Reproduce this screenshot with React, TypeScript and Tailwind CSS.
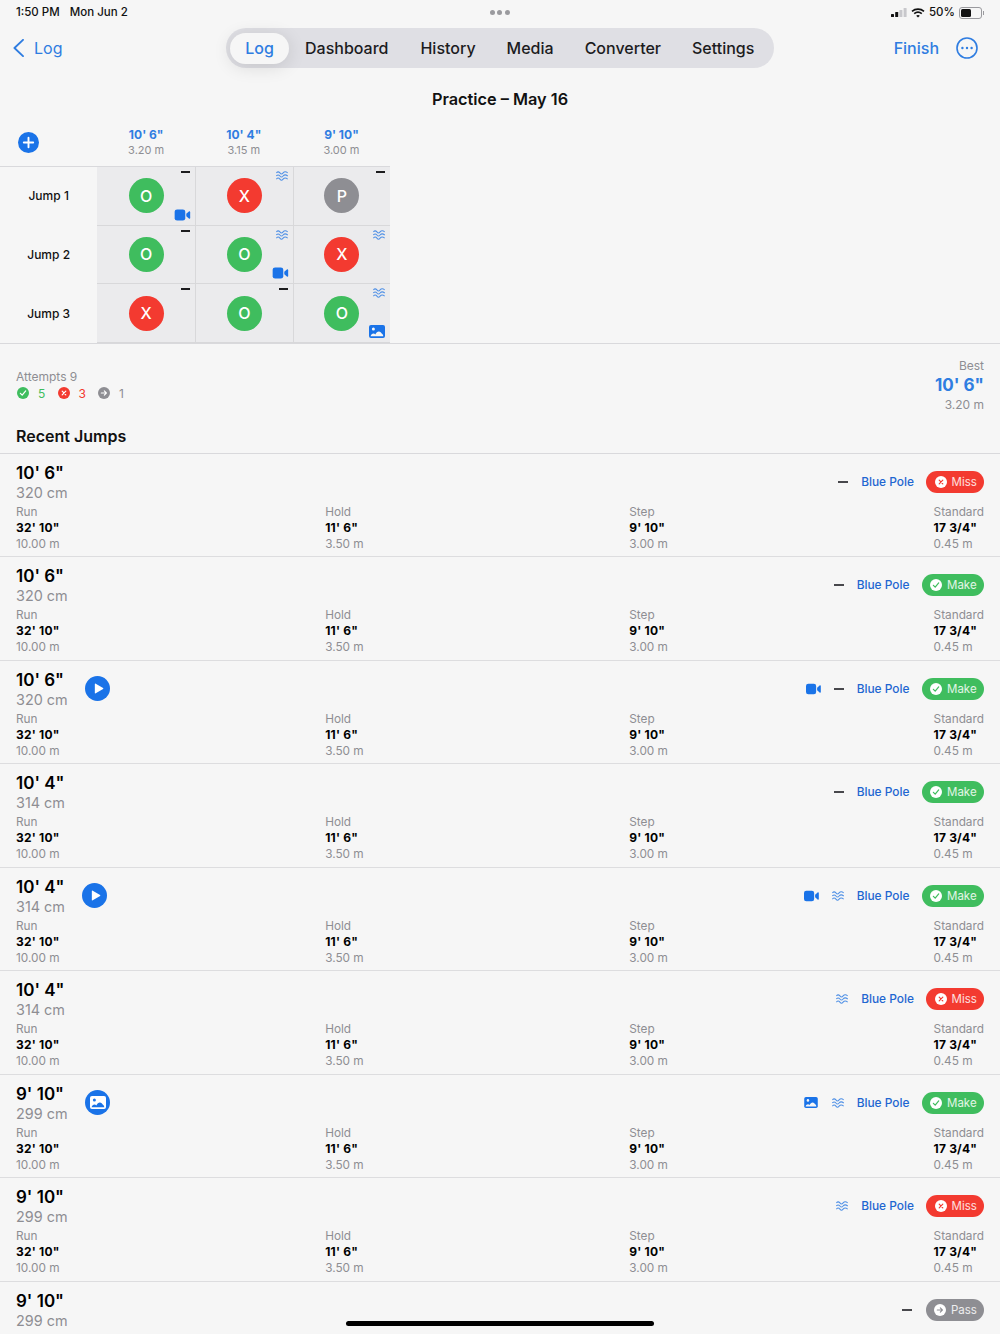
import React from "react";

const Video = ({ className = "" }: { className?: string }) => (
  <svg viewBox="0 0 17 13" className={className} fill="#1a73e8">
    <rect x="0" y="0.5" width="11.5" height="12" rx="2.6" />
    <path d="M12.6 5.2 15.4 2.6c.6-.5 1.4-.2 1.4.6v6.6c0 .8-.8 1.1-1.4.6l-2.8-2.6z" />
  </svg>
);

const Photo = ({ className = "", fill = "#1a73e8", ink = "#f6f6f6" }: { className?: string; fill?: string; ink?: string }) => (
  <svg viewBox="0 0 16 13" className={className}>
    <rect x="0" y="0" width="16" height="13" rx="2" fill={fill} />
    <circle cx="4.4" cy="4" r="1.5" fill={ink} />
    <path d="M1.6 11.2c.5-1.6 1.6-2.6 2.8-2.6.9 0 1.4.4 1.9.9.9-2 2.2-3.1 3.6-3.1 1.3 0 2.4 1 3 2.3.6.1 1.2.9 1.4 2.5z" fill={ink} />
  </svg>
);

const Waves = ({ className = "" }: { className?: string }) => (
  <svg viewBox="0 0 12 10" className={className} fill="none" stroke="#4f90e6" strokeWidth="1.05">
    <path d="M.3 1.9c1.3-1.4 2.4-1.4 3.6 0s2 1.4 3.2 0 2.9-1.4 4.6 0" />
    <path d="M.3 5c1.3-1.4 2.4-1.4 3.6 0s2 1.4 3.2 0 2.9-1.4 4.6 0" />
    <path d="M.3 8.1c1.3-1.4 2.4-1.4 3.6 0s2 1.4 3.2 0 2.9-1.4 4.6 0" />
  </svg>
);

const Dash = ({ className = "bg-[#1c1c1e]" }: { className?: string }) => <div className={`h-[2px] w-[9px] ${className}`} />;

type Mark = "check" | "x" | "arrow" | "plus";

const Glyph = ({ mark, color, className }: { mark: Mark; color: string; className?: string }) => (
  <svg viewBox="0 0 12 12" className={className}>
    <circle cx="6" cy="6" r="6" fill="white" />
    {mark === "check" && <path d="M3.4 6.3 5.2 8.2 8.7 3.9" fill="none" stroke={color} strokeWidth="1.2" strokeLinecap="round" strokeLinejoin="round" />}
    {mark === "x" && <path d="M4.2 4.2 7.8 7.8M7.8 4.2 4.2 7.8" fill="none" stroke={color} strokeWidth="1.2" strokeLinecap="round" />}
    {mark === "arrow" && <path d="M3.3 6h5M6.3 3.9 8.4 6 6.3 8.1" fill="none" stroke={color} strokeWidth="1.1" strokeLinecap="round" strokeLinejoin="round" />}
  </svg>
);

const StatDot = ({ mark, bg }: { mark: Mark; bg: string }) => (
  <svg viewBox="0 0 12 12" className="h-[12px] w-[12px]">
    <circle cx="6" cy="6" r="6" fill={bg} />
    {mark === "check" && <path d="M3.4 6.3 5.2 8.2 8.7 3.9" fill="none" stroke="white" strokeWidth="1.2" strokeLinecap="round" strokeLinejoin="round" />}
    {mark === "x" && <path d="M4.2 4.2 7.8 7.8M7.8 4.2 4.2 7.8" fill="none" stroke="white" strokeWidth="1.2" strokeLinecap="round" />}
    {mark === "arrow" && <path d="M3.3 6h5M6.3 3.9 8.4 6 6.3 8.1" fill="none" stroke="white" strokeWidth="1.1" strokeLinecap="round" strokeLinejoin="round" />}
  </svg>
);

type Cell = { r: "O" | "X" | "P"; top: "dash" | "wave"; media?: "video" | "photo" };

const grid: Cell[][] = [
  [{ r: "O", top: "dash", media: "video" }, { r: "X", top: "wave" }, { r: "P", top: "dash" }],
  [{ r: "O", top: "dash" }, { r: "O", top: "wave", media: "video" }, { r: "X", top: "wave" }],
  [{ r: "X", top: "dash" }, { r: "O", top: "dash" }, { r: "O", top: "wave", media: "photo" }],
];

const resultBg = { O: "bg-[#3fbd5e]", X: "bg-[#f33a30]", P: "bg-[#8e8e93]" };

type Status = "Miss" | "Make" | "Pass";
type Row = { ft: string; cm: string; status: Status; top: "dash" | "wave"; media?: "video" | "photo" };

const rows: Row[] = [
  { ft: `10' 6"`, cm: "320 cm", status: "Miss", top: "dash" },
  { ft: `10' 6"`, cm: "320 cm", status: "Make", top: "dash" },
  { ft: `10' 6"`, cm: "320 cm", status: "Make", top: "dash", media: "video" },
  { ft: `10' 4"`, cm: "314 cm", status: "Make", top: "dash" },
  { ft: `10' 4"`, cm: "314 cm", status: "Make", top: "wave", media: "video" },
  { ft: `10' 4"`, cm: "314 cm", status: "Miss", top: "wave" },
  { ft: `9' 10"`, cm: "299 cm", status: "Make", top: "wave", media: "photo" },
  { ft: `9' 10"`, cm: "299 cm", status: "Miss", top: "wave" },
];

const Pill = ({ status }: { status: Status }) => {
  const cfg = {
    Miss: { bg: "bg-[#f33a30]", mark: "x" as Mark, color: "#f33a30", w: "w-[58px]" },
    Make: { bg: "bg-[#3fbd5e]", mark: "check" as Mark, color: "#3fbd5e", w: "w-[62.5px]" },
    Pass: { bg: "bg-[#8e8e93]", mark: "arrow" as Mark, color: "#8e8e93", w: "w-[58.5px]" },
  }[status];
  return (
    <div className={`flex h-[22px] items-center gap-[5px] rounded-full pl-[8.5px] ${cfg.bg} ${cfg.w} text-[11.5px] text-white/85`}>
      <Glyph mark={cfg.mark} color={cfg.color} className="h-[12px] w-[12px]" />
      <span className="pt-[1px]">{status}</span>
    </div>
  );
};

const Measure = ({ label, ft, m }: { label: string; ft: string; m: string }) => (
  <div className="flex flex-col">
    <span className="h-[16px] text-[11.8px] leading-[16px] text-[#8e8e93]">{label}</span>
    <span className="h-[16px] text-[12px] font-bold leading-[16px] tracking-[0.2px] text-black">{ft}</span>
    <span className="h-[16px] text-[11.8px] leading-[16px] text-[#8e8e93]">{m}</span>
  </div>
);

const Heading = ({ ft, cm }: { ft: string; cm: string }) => (
  <div className="flex flex-col pt-[2px]">
    <span className="h-[20px] text-[17px] font-semibold leading-[20px] text-black">{ft}</span>
    <span className="h-[20px] text-[14.4px] leading-[20px] text-[#8e8e93]">{cm}</span>
  </div>
);

const JumpRow = ({ row }: { row: Row }) => (
  <div className="h-[103.5px] border-b border-[#dddddf] px-4 pt-[8px]">
    <div className="flex h-[40px] items-center">
      <Heading ft={row.ft} cm={row.cm} />
      {row.media && (
        <div className="ml-[17.5px] flex h-[25px] w-[25px] items-center justify-center rounded-full bg-[#1a73e8]">
          {row.media === "video" ? (
            <svg viewBox="0 0 12 12" className="ml-[2px] h-[11px] w-[11px]" fill="white"><path d="M2 1.2v9.6c0 .5.5.8 1 .5l8-4.8c.4-.3.4-.7 0-1L3 .7c-.5-.3-1 0-1 .5z" /></svg>
          ) : (
            <Photo className="h-[13px] w-[16px]" fill="white" ink="#1a73e8" />
          )}
        </div>
      )}
      <div className="ml-auto flex items-center">
        {row.media === "video" && <Video className="mr-[13px] h-[12px] w-[15px]" />}
        {row.media === "photo" && <Photo className="mr-[14px] h-[11px] w-[14px]" />}
        {row.top === "dash" ? <Dash className="mr-[13px] w-[10px] bg-[#48484c]" /> : <Waves className="mr-[13px] h-[10px] w-[12px]" />}
        <span className="mr-[12px] -mt-[1px] text-[11.9px] font-medium text-[#1f66d1]">Blue Pole</span>
        <Pill status={row.status} />
      </div>
    </div>
    <div className="flex justify-between pt-[2px]">
      <Measure label="Run" ft={`32' 10"`} m="10.00 m" />
      <Measure label="Hold" ft={`11' 6"`} m="3.50 m" />
      <Measure label="Step" ft={`9' 10"`} m="3.00 m" />
      <Measure label="Standard" ft={`17 3/4"`} m="0.45 m" />
    </div>
  </div>
);

const ColHead = ({ ft, m }: { ft: string; m: string }) => (
  <div className="mb-[2px] flex w-[97.67px] flex-col items-center">
    <span className="h-[16px] text-[12px] font-bold leading-[16px] text-[#2f7de1]">{ft}</span>
    <span className="-mt-[1px] h-[16px] text-[11px] leading-[16px] text-[#8e8e93]">{m}</span>
  </div>
);

export default function App() {
  return (
    <div className="relative h-[1334px] w-[1000px] overflow-hidden bg-[#f6f6f6] text-black" style={{ fontFamily: "Inter, 'Liberation Sans', sans-serif" }}>
      {/* status bar */}
      <div className="grid h-[24px] grid-cols-3 items-center px-4 text-[11.5px]">
        <div className="flex gap-[10px] pt-[1px] font-medium text-[#111]">
          <span>1:50 PM</span>
          <span>Mon Jun 2</span>
        </div>
        <div className="flex justify-center gap-[2.5px]">
          <i className="h-[5px] w-[5px] rounded-full bg-[#9a9a9e]" />
          <i className="h-[5px] w-[5px] rounded-full bg-[#9a9a9e]" />
          <i className="h-[5px] w-[5px] rounded-full bg-[#9a9a9e]" />
        </div>
        <div className="flex items-center justify-end pt-[1px] font-medium text-[#111]">
          <svg viewBox="0 0 16 9" className="mr-[4px] h-[9px] w-[16px]">
            <rect x="0" y="6" width="3" height="3" rx=".6" fill="#111" />
            <rect x="4.2" y="4" width="3" height="5" rx=".6" fill="#111" />
            <rect x="8.4" y="2" width="3" height="7" rx=".6" fill="#c8c8cc" />
            <rect x="12.6" y="0" width="3" height="9" rx=".6" fill="#c8c8cc" />
          </svg>
          <svg viewBox="0 0 14 10" className="mr-[4px] h-[10px] w-[14px]" fill="none" stroke="#111" strokeWidth="1.6">
            <path d="M1 3.4C4.4.4 9.6.4 13 3.4" />
            <path d="M3.2 5.7c2.2-1.9 5.4-1.9 7.6 0" />
            <path d="M7 9.6 5.2 7.7c1.1-.8 2.5-.8 3.6 0z" fill="#111" stroke="none" />
          </svg>
          <span className="mr-[4px]">50%</span>
          <div className="flex items-center">
            <div className="flex h-[12px] w-[23px] items-center rounded-[3px] border border-[#9a9a9e] p-[1px]">
              <div className="h-full w-[10px] rounded-[1.5px] bg-[#111]" />
            </div>
            <div className="ml-[1px] h-[4px] w-[1px] bg-[#9a9a9e]" />
          </div>
        </div>
      </div>

      {/* nav bar */}
      <div className="mt-[4px] grid h-[40px] grid-cols-[226px_548px_226px] items-center">
        <div className="flex items-center pl-[13px] text-[16px] text-[#2f7de1]">
          <svg viewBox="0 0 12 20" className="mr-[10px] h-[18px] w-[11px]" fill="none" stroke="#2f7de1" strokeWidth="2.1" strokeLinecap="round" strokeLinejoin="round">
            <path d="M11 1 1.5 10 11 19" />
          </svg>
          <span>Log</span>
        </div>
        <div className="flex h-[40px] items-center rounded-full bg-[#dfdfe4] pl-[4px] text-[16px] font-medium text-[#1c1c1e]">
          <div className="flex h-[31px] w-[59px] shrink-0 items-center justify-center rounded-full bg-[#f6f6f6] text-[#2f7de1] shadow-[0_3px_18px_rgba(0,0,0,0.12)]">Log</div>
          <span className="ml-[16px]">Dashboard</span>
          <span className="ml-[32px]">History</span>
          <span className="ml-[31px]">Media</span>
          <span className="ml-[31px]">Converter</span>
          <span className="ml-[31px]">Settings</span>
        </div>
        <div className="flex items-center justify-end gap-[17px] pr-[22px] text-[16px] font-medium text-[#2f7de1]">
          <span>Finish</span>
          <svg viewBox="0 0 22 22" className="h-[22px] w-[22px]" fill="none" stroke="#2f7de1" strokeWidth="1.6">
            <circle cx="11" cy="11" r="10" />
            <circle cx="6.4" cy="11" r="1.2" fill="#2f7de1" stroke="none" />
            <circle cx="11" cy="11" r="1.2" fill="#2f7de1" stroke="none" />
            <circle cx="15.6" cy="11" r="1.2" fill="#2f7de1" stroke="none" />
          </svg>
        </div>
      </div>

      {/* title */}
      <div className="mt-[19px] h-[24px] text-center text-[16.3px] font-semibold leading-[24px] text-[#111]">Practice – May 16</div>

      {/* columns */}
      <div className="mt-[15px] flex h-[34px] items-center">
        <div className="flex w-[97.33px] pl-[18px]">
          <svg viewBox="0 0 21 21" className="-mt-[1px] h-[21px] w-[21px]">
            <circle cx="10.5" cy="10.5" r="10.5" fill="#1a73e8" />
            <path d="M10.5 5.8v9.4M5.8 10.5h9.4" stroke="white" strokeWidth="1.9" strokeLinecap="round" />
          </svg>
        </div>
        <ColHead ft={`10' 6"`} m="3.20 m" />
        <ColHead ft={`10' 4"`} m="3.15 m" />
        <ColHead ft={`9' 10"`} m="3.00 m" />
      </div>

      {/* grid */}
      <div className="mt-[6px] h-px w-[390.33px] bg-[#d9d9dc]" />
      <div className="border-b border-[#d9d9dc]">
        {grid.map((cells, i) => (
          <div key={i} className="flex h-[58.67px]">
            <div className="flex w-[97.33px] items-center justify-center text-[12px] font-medium text-[#111]">Jump {i + 1}</div>
            {cells.map((c, j) => (
              <div key={j} className={`relative flex w-[97.67px] items-center justify-center border-b border-[#d8d8da] bg-[#ebebed] ${j > 0 ? "border-l" : ""}`}>
                <div className={`flex h-[35px] w-[35px] items-center justify-center rounded-full text-[16px] font-medium text-white ${resultBg[c.r]}`}>{c.r}</div>
                <div className={`absolute right-[5px] ${c.top === "dash" ? "top-[3px]" : "top-[4px]"}`}>
                  {c.top === "dash" ? <Dash className="mt-[1px] h-[1.5px] bg-[#1c1c1e]" /> : <Waves className="h-[10px] w-[12px]" />}
                </div>
                {c.media === "video" && <Video className="absolute bottom-[4px] right-[4px] h-[12px] w-[17px]" />}
                {c.media === "photo" && <Photo className="absolute bottom-[4px] right-[5px] h-[13px] w-[16px]" />}
              </div>
            ))}
          </div>
        ))}
      </div>

      {/* summary */}
      <div className="flex h-[71px] justify-between px-4 pt-[15px]">
        <div className="pt-[10px]">
          <div className="h-[15px] text-[12px] leading-[15px] text-[#8e8e93]">Attempts 9</div>
          <div className="mt-[2px] flex h-[15px] items-center pl-[1px] text-[12px] leading-[15px]">
            <StatDot mark="check" bg="#3fbd5e" />
            <span className="ml-[9px] w-[19.5px] text-[#3fbd5e]">5</span>
            <StatDot mark="x" bg="#f33a30" />
            <span className="ml-[9px] w-[19.5px] text-[#f33a30]">3</span>
            <StatDot mark="arrow" bg="#8e8e93" />
            <span className="ml-[9px] text-[#8e8e93]">1</span>
          </div>
        </div>
        <div className="flex flex-col items-end">
          <span className="h-[14px] text-[12px] leading-[14px] text-[#8e8e93]">Best</span>
          <span className="mt-[1px] h-[22px] text-[17px] font-bold leading-[22px] text-[#2f7de1]">10' 6"</span>
          <span className="mt-[1px] h-[16px] text-[12px] leading-[16px] text-[#8e8e93]">3.20 m</span>
        </div>
      </div>

      {/* recent header */}
      <div className="h-[39px] border-b border-[#d9d9dc] px-4 pt-[10px] text-[16px] font-semibold leading-[22px] text-[#111]">Recent Jumps</div>

      {rows.map((row, i) => (
        <JumpRow key={i} row={row} />
      ))}

      {/* last row */}
      <div className="px-4 pt-[8px]">
        <div className="flex h-[40px] items-center">
          <Heading ft={`9' 10"`} cm="299 cm" />
          <div className="ml-auto flex items-center">
            <Dash className="mr-[13.5px] w-[10px] bg-[#48484c]" />
            <Pill status="Pass" />
          </div>
        </div>
      </div>

      {/* home indicator */}
      <div className="absolute bottom-[8px] left-[346px] h-[5px] w-[308px] rounded-full bg-black" />
    </div>
  );
}
